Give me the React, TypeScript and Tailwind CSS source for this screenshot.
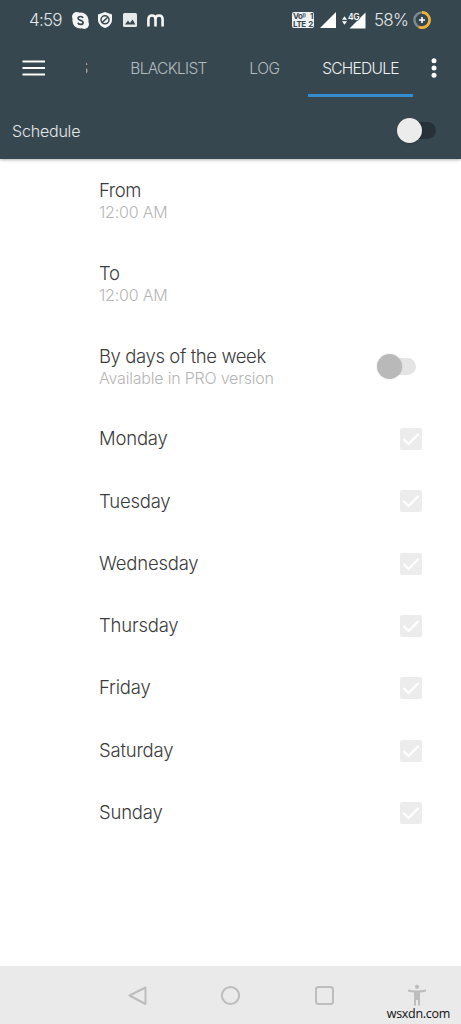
import { useState } from "react";
import clsx from "clsx";

const days = ["Monday", "Tuesday", "Wednesday", "Thursday", "Friday", "Saturday", "Sunday"];

function StatusBar() {
  return (
    <div className="flex h-10 shrink-0 items-center pl-[29px] text-[#e3e8ea]">
      <span className="w-[43px] whitespace-nowrap pt-[2px] text-[17px] font-light tracking-[-0.8px]">4:59</span>
      <svg className="h-[17px] w-[17px]" viewBox="0 0 17 17">
        <circle cx="4.7" cy="4.7" r="4.7" fill="#f4f6f6" />
        <circle cx="12.3" cy="12.3" r="4.7" fill="#f4f6f6" />
        <circle cx="8.5" cy="8.5" r="8.1" fill="#f4f6f6" />
        <path
          d="M11 5.900C10.600 4.800 9.600 4.500 8.500 4.500c-1.400 0-2.400.7-2.400 1.800 0 2.500 5 1.600 5 4.100 0 1.300-1.200 2-2.600 2S6.200 11.900 5.900 10.800"
          fill="none"
          stroke="#37474f"
          strokeWidth="1.700"
        />
      </svg>
      <svg className="ml-[9px] h-4 w-[14px]" viewBox="0 0 14 16">
        <path d="M7 0l7 2.500v5.200c0 3.900-3 7-7 8.300-4-1.300-7-4.400-7-8.300V2.500z" fill="#f4f6f6" />
        <circle cx="7" cy="7.800" r="4" fill="none" stroke="#37474f" strokeWidth="1.500" />
        <path d="M4.300 10.400l5.400-5.200" stroke="#37474f" strokeWidth="1.500" />
      </svg>
      <svg className="ml-[11px] h-[14px] w-[14px]" viewBox="0 0 14 14">
        <rect width="14" height="14" rx="1.500" fill="#e6eaeb" />
        <path d="M2 11.600l3-4 2 2.300 2.600-3.400 2.700 5.100z" fill="#37474f" />
      </svg>
      <svg className="ml-[10px] h-[13px] w-[17px]" viewBox="0 0 17 13">
        <path
          d="M1.400 12.500V5.200Q1.600 1.500 5 1.500T8.500 5.200V12.500M8.500 5.200Q8.500 1.500 12 1.500T15.600 5.200V12.500"
          fill="none"
          stroke="#f4f6f6"
          strokeWidth="2.600"
        />
      </svg>
      <div className="ml-[128px] grid h-4 w-[22px] shrink-0 rounded-[2px] bg-[#eef1f2] px-px text-[8px] leading-[8px] font-bold tracking-[-0.4px] text-[#37474f]">
        <div className="flex h-2 justify-between whitespace-nowrap">
          <span>
            Vo<sup className="text-[5px]">))</sup>
          </span>
          <span>1</span>
        </div>
        <div className="flex h-2 justify-between">
          <span>LTE</span>
          <span>2</span>
        </div>
      </div>
      <svg className="ml-[6px] h-4 w-4" viewBox="0 0 16 16">
        <path d="M16 0v16H0z" fill="#fff" />
      </svg>
      <svg className="ml-[6px] h-[17px] w-6 shrink-0" viewBox="0 0 24 17">
        <path d="M2.500 4.300l2.600 3.500H0zM2.500 12.700L0 9.200h5.100z" fill="#fff" />
        <path d="M23.500.5v16H7.500z" fill="#fff" />
        <text x="6" y="7.500" fontSize="8.500" fontWeight="600" fill="#fff" stroke="#37474f" strokeWidth="1.200" paintOrder="stroke" letterSpacing="-0.5">
          4G
        </text>
      </svg>
      <span className="ml-[8px] w-[35px] whitespace-nowrap pt-[2px] text-[17px] font-light tracking-[-0.8px]">58%</span>
      <svg className="ml-[4px] h-[18px] w-[18px] shrink-0" viewBox="0 0 18 18">
        <circle cx="9" cy="9" r="7.600" fill="none" stroke="#7f8a90" strokeWidth="2.400" />
        <path d="M9 1.400a7.600 7.600 0 1 1-3 14.600" fill="none" stroke="#f3b233" strokeWidth="2.600" />
        <path d="M9 6v6M6 9h6" stroke="#fff" strokeWidth="1.600" />
      </svg>
    </div>
  );
}

function TabBar() {
  return (
    <div className="flex h-[57px] shrink-0 text-[15.500px] font-light text-[#b3bcc0]">
      <button className="ml-[22px] w-[64px]" aria-label="Menu">
        <svg className="-mt-[2px] h-4 w-6" viewBox="0 0 24 16">
          <path d="M.5 1.500h22.500M.5 8h22.500M.5 14.500h22.500" stroke="#fff" strokeWidth="2.200" />
        </svg>
      </button>
      {/* previous tab, scrolled mostly out of the strip */}
      <div className="flex w-[30px] overflow-hidden">
        <span className="-ml-[7.500px] flex items-center">S</span>
      </div>
      <button className="w-[105px] whitespace-nowrap tracking-[-0.7px]">BLACKLIST</button>
      <button className="w-[87px] whitespace-nowrap tracking-[-0.4px]">LOG</button>
      <button className="relative w-[105px] whitespace-nowrap tracking-[-0.7px] text-[#eff2f3]">
        SCHEDULE
        <span className="absolute inset-x-0 bottom-0 h-[3px] bg-[#348bce]" />
      </button>
      <button className="w-[42px] pb-[2px]" aria-label="More">
        <svg className="mx-auto h-5 w-[6px]" viewBox="0 0 6 20">
          <circle cx="3" cy="2.700" r="2.500" fill="#fff" />
          <circle cx="3" cy="10" r="2.500" fill="#fff" />
          <circle cx="3" cy="17.300" r="2.500" fill="#fff" />
        </svg>
      </button>
    </div>
  );
}

function Switch({ dark = false }: { dark?: boolean }) {
  const [on, setOn] = useState(false);

  return (
    <button role="switch" aria-checked={on} onClick={() => setOn(!on)} className="flex h-[17px] w-[38px] items-center pl-[10px]">
      <span
        className={clsx(
          "flex h-[17px] w-[28px] items-center rounded-full",
          on && "justify-end",
          dark ? "bg-[#263238]" : "bg-[#e4e4e4]"
        )}
      >
        <span
          className={clsx(
            "h-[25px] w-[25px] shrink-0 rounded-full",
            !on && "-ml-[11px]",
            dark ? "bg-[#ececec] shadow-[0_1px_2px_rgba(0,0,0,0.2)]" : "bg-[#b9b9b9] shadow-[0_0_2px_rgba(0,0,0,0.15)]"
          )}
        />
      </span>
    </button>
  );
}

function TimeRow({ title, value }: { title: string; value: string }) {
  return (
    <div className="h-[83px] pt-[19px]">
      <div className="text-[18.500px] leading-6 font-[350] tracking-[-0.4px] text-[#3c3c3c]">{title}</div>
      <div className="text-[16px] leading-5 font-light tracking-[-0.2px] text-[#b5b5b5]">{value}</div>
    </div>
  );
}

function NavBar() {
  return (
    <nav className="relative h-[58px] shrink-0 bg-[#eaeaea]">
      <svg className="h-[58px] w-full" viewBox="0 0 461 58" fill="none" stroke="#bdbdbd" strokeWidth="2">
        <path d="M145.500 21.500v16.500L129.500 29.500z" strokeLinejoin="round" />
        <circle cx="230.500" cy="29.500" r="8.600" />
        <rect x="316" y="21" width="17" height="17" rx="2.500" />
        <circle cx="417" cy="20.800" r="2.100" fill="#bdbdbd" stroke="none" />
        <path d="M408 23.500q9 2 18 0v2q-3 .8-6 1v13h-2V34h-2v5.500h-2v-13q-3-.2-6-1z" fill="#bdbdbd" stroke="none" />
      </svg>
      <span className="absolute right-[11px] bottom-[2px] font-['Open_Sans'] text-[12.500px] leading-4 tracking-[-0.3px] text-[#111]">
        wsxdn.com
      </span>
    </nav>
  );
}

export default function App() {
  return (
    <div className="flex h-[1024px] w-[461px] flex-col overflow-hidden bg-white font-['Inter',sans-serif]">
      <header className="flex h-[159px] shrink-0 flex-col bg-[#37474f] shadow-[0_1px_3px_rgba(0,0,0,0.3)]">
        <StatusBar />
        <TabBar />
        <div className="flex h-[62px] items-center justify-between pt-[5px] pr-[25px] pl-3">
          <span className="text-[16px] font-light tracking-[-0.2px] text-[#e3e8ea]">Schedule</span>
          <Switch dark />
        </div>
      </header>
      <main className="flex-1 pr-[39px] pl-[99px]">
        <TimeRow title="From" value="12:00 AM" />
        <TimeRow title="To" value="12:00 AM" />
        <div className="flex items-center justify-between pr-[6px]">
          <TimeRow title="By days of the week" value="Available in PRO version" />
          <Switch />
        </div>
        {days.map((day) => (
          <label key={day} className="flex h-[62.300px] items-center justify-between">
            <span className="text-[18.500px] font-[350] tracking-[-0.2px] text-[#3c3c3c]">{day}</span>
            <svg className="h-[22px] w-[22px]" viewBox="0 0 22 22">
              <rect width="22" height="22" rx="2" fill="#ececec" />
              <path d="M3.500 11l5 5L18.500 6" fill="none" stroke="#fff" strokeWidth="2.200" />
            </svg>
          </label>
        ))}
      </main>
      <NavBar />
    </div>
  );
}
